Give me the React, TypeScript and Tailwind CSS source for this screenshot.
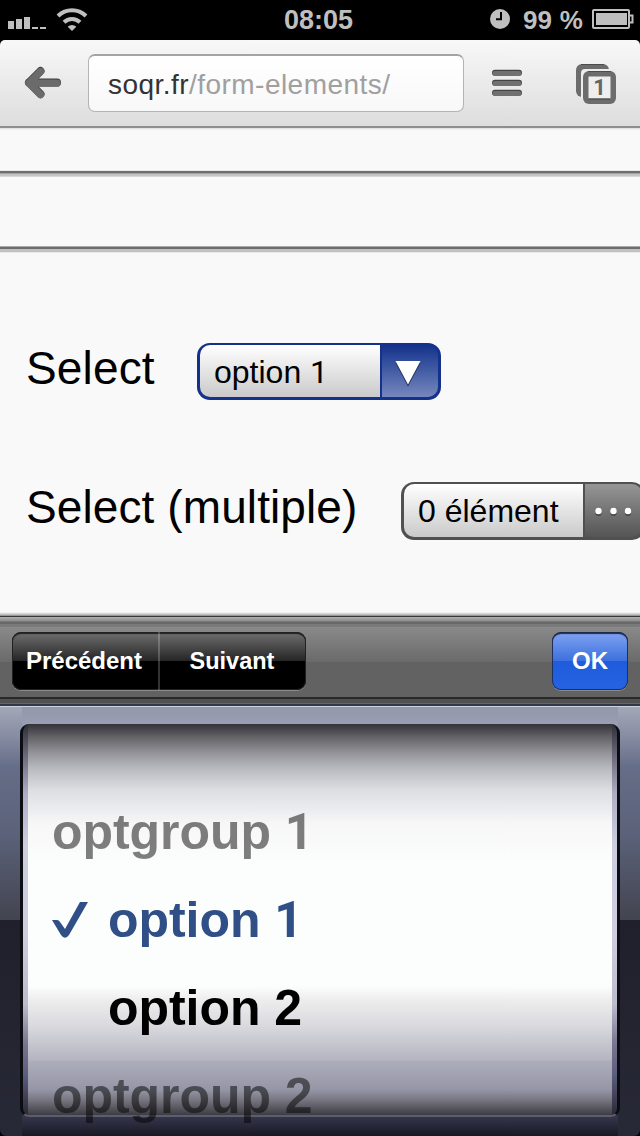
import React from "react";

const wheelRows = [
  { label: "optgroup", number: "1", kind: "group" },
  { label: "option", number: "1", kind: "selected" },
  { label: "option", number: "2", kind: "option" },
  { label: "optgroup", number: "2", kind: "group" },
];

function StatusBar() {
  return (
    <header className="grid h-10 grid-cols-[1fr_auto_1fr] items-center bg-black text-[#bfbfbf]">
      <div className="flex items-center pl-2">
        <svg width="82" height="40" viewBox="0 0 82 40" fill="#bfbfbf">
          <path d="M0 21h6v8H0zM8 19h6v10H8zM16 17h6v12h-6zM24 27h6v2h-6zM32 27h6v2h-6z" />
          <path d="M64 31l-4.300-4.300a6 6 0 0 1 8.600 0z" />
          <path d="M56 22.300a11.500 11.500 0 0 1 16 0" fill="none" stroke="#bfbfbf" strokeWidth="4" />
          <path d="M50 16a20 20 0 0 1 28 0" fill="none" stroke="#bfbfbf" strokeWidth="4" />
        </svg>
      </div>
      <div className="pr-[3px] text-[27px] leading-10 font-bold">08:05</div>
      <div className="flex items-center justify-end pr-1.5">
        <svg width="20" height="40" viewBox="0 0 20 40">
          <circle cx="10" cy="19" r="10" fill="#bfbfbf" />
          <path d="M11 12v7.300H6" fill="none" stroke="#000" strokeWidth="2" />
        </svg>
        <div className="ml-[13px] text-[26px] leading-10 font-bold tracking-[0.2px]">99 %</div>
        <svg className="ml-[9px]" width="42" height="40" viewBox="0 0 42 40">
          <path d="M2 9.900h34a1 1 0 0 1 1 1V27a1 1 0 0 1-1 1H2a1 1 0 0 1-1-1V10.900a1 1 0 0 1 1-1z" fill="none" stroke="#bfbfbf" strokeWidth="2" />
          <path d="M4 13h31v12H4z" fill="#bfbfbf" />
          <path d="M37 15.500h3.500v7H37" fill="none" stroke="#bfbfbf" strokeWidth="2" />
        </svg>
      </div>
    </header>
  );
}

function BrowserBar() {
  return (
    <div className="bg-black">
      <nav className="flex h-[88px] items-start rounded-t-[5px] border-b-2 border-[#8d8d8d] bg-linear-to-b from-[#f8f8f8] to-[#dddddd] pt-3.5">
        <svg className="ml-6" width="40" height="58" viewBox="0 0 40 58" fill="none" strokeLinecap="round" strokeLinejoin="round" strokeWidth="8">
          <path d="M16.500 17L5 28.500L16.500 40M5 28.500H33" stroke="#3c3c3c" />
          <path d="M16.500 17.700L5 29.200L16.500 40.700M5 29.200H33" stroke="#6b6b6b" strokeWidth="7.300" />
        </svg>
        <div className="ml-6 flex h-[58px] w-[376px] rounded-[7px] border border-t-2 border-[#b4b4b4] border-t-[#a4a4a4] bg-linear-to-b from-white to-[#f8f8f8] pl-[19px] text-[28px] leading-[58px] tracking-[0.46px] text-[#a0a0a0]">
          <span className="text-[#333]">soqr.fr</span>
          <span>/form-elements/</span>
        </div>
        <svg className="ml-7" width="32" height="58" viewBox="0 0 32 58">
          <path d="M3 18.800h24M3 28.800h24M3 38.800h24" stroke="#444" strokeWidth="6" strokeLinecap="round" />
          <path d="M3 19.500h24M3 29.500h24M3 39.500h24" stroke="#707070" strokeWidth="5" strokeLinecap="round" />
        </svg>
        <svg className="ml-[52px]" width="42" height="58" viewBox="0 0 42 58">
          <rect x="0" y="10" width="33" height="33" rx="6" fill="#6c6c6c" />
          <path d="M5 10.500h23" stroke="#4c4c4c" />
          <path d="M5 43V19a4 4 0 0 1 4-4h31v29H5z" fill="#ececec" />
          <rect x="7" y="17" width="33" height="33" rx="6" fill="#6c6c6c" />
          <path d="M12 17.500h23" stroke="#4c4c4c" />
          <rect x="12.500" y="22.500" width="22" height="22" fill="#eee" />
          <path d="M12.500 45h22" stroke="#444" />
          <text x="23.500" y="41" textAnchor="middle" fontSize="22" fontWeight="700" fill="#666" fontFamily="Roboto, sans-serif">1</text>
        </svg>
      </nav>
    </div>
  );
}

function FormPage() {
  return (
    <main className="flex h-[484px] flex-col overflow-hidden bg-[#f9f9f9] text-black">
      <div className="h-[42px] bg-[linear-gradient(#e2e2e2_0_1px,#f0f0f0_1px_2px,#f9f9f9_2px)]" />
      <div className="h-[7px] shrink-0 bg-[linear-gradient(#e8e8e8_0_1px,#6e6e6e_1px_3px,#a0a0a0_3px_4px,#c4c4c4_4px_6px,#d8d8d8_6px)]" />
      <div className="h-[69px] shrink-0" />
      <div className="h-[7px] shrink-0 bg-[linear-gradient(#a8a8a8_0_1px,#6e6e6e_1px_3px,#c2c2c2_3px_6px,#e8e8e8_6px)]" />
      <div className="mt-[89px] flex h-[60px] shrink-0 items-start pl-[26px]">
        <label className="w-[171px] text-[46px] leading-[52px] tracking-[0.15px]">Select</label>
        <button className="mt-px flex h-[57px] w-[244px] overflow-hidden rounded-[13px] bg-[#14318b] px-[3px] pt-[2px] pb-[3px] text-left text-[32px] leading-[55px]">
          <span className="h-[52px] w-[180px] shrink-0 rounded-l-[10px] bg-linear-to-b from-white to-[#cacaca] pl-3.5">
            option <span className="font-[Roboto,sans-serif]">1</span>
          </span>
          <span className="ml-[2px] flex h-[52px] w-[56px] justify-center rounded-r-[10px] bg-linear-to-b from-[#14318b] to-[#7787bd]">
            <svg className="-ml-[5px]" width="30" height="52" viewBox="0 0 30 52">
              <path d="M2.500 18h25L15 41.500z" fill="#233055" />
              <path d="M2.500 16h25L15 39.500z" fill="white" />
            </svg>
          </span>
        </button>
      </div>
      <div className="mt-[79px] flex h-[60px] shrink-0 items-start pl-[26px]">
        <label className="w-[375px] shrink-0 text-[46px] leading-[52px] tracking-[0.1px] whitespace-nowrap">Select (multiple)</label>
        <button className="mt-px flex h-[58px] w-[244px] shrink-0 overflow-hidden rounded-[13px] bg-[#505050] p-[3px] pt-[2px] text-left text-[32px] leading-[55px]">
          <span className="h-[53px] w-[179px] shrink-0 rounded-l-[10px] bg-linear-to-b from-white to-[#cacaca] pl-3.5">0 élément</span>
          <span className="ml-[2px] h-[53px] w-[57px] rounded-r-[10px] bg-linear-to-b from-[#969696] to-[#555]">
            <svg width="56" height="52" viewBox="0 0 56 52">
              <g fill="#444"><circle cx="13.500" cy="29" r="3" /><circle cx="28.500" cy="29" r="3" /><circle cx="43" cy="29" r="3" /></g>
              <g fill="white"><circle cx="13.500" cy="27" r="3.200" /><circle cx="28.500" cy="27" r="3.200" /><circle cx="43" cy="27" r="3.200" /></g>
            </svg>
          </span>
        </button>
      </div>
    </main>
  );
}

function AccessoryBar() {
  return (
    <div className="flex h-[95px] items-start justify-between bg-[linear-gradient(#f0f0f0_0_1px,#d8d8d8_1px_2px,#bdbdbd_2px_3px,#989898_3px_4px,#383838_4px_5px,#b2b2b2_5px,#8c8c8c_9px,#686868_10px_12px,#7a7a7a_12px_15px,#8a8a8a_15px,#6a6a6a_50px,#626262_50px,#626262_85px,#292929_85px_87px,#515151_87px_91px,#68675f_91px_92px,#30394a_92px_94px,#cbd2dc_94px)] px-3 pt-5 text-[24px] font-bold text-white [text-shadow:0_-2px_1px_rgba(0,0,0,.6)]">
      <div className="flex h-[58px] w-[294px] rounded-[9px] bg-[linear-gradient(#707070,#252525_50%,#000_50%)] leading-[56px] shadow-[inset_0_2px_1px_#222,inset_0_0_0_1px_#222,0_1px_0_#8a8a8a]">
        <button className="w-[148px] border-r-2 border-white/20 pr-[2px] text-center">Précédent</button>
        <button className="w-[146px] pr-[2px] text-center text-[23.5px]">Suivant</button>
      </div>
      <button className="h-[58px] w-[76px] rounded-[9px] bg-[linear-gradient(#81a4f2,#3c70dd_50%,#1f5cdb_50%,#2463e2)] leading-[56px] shadow-[inset_0_2px_1px_#202947,inset_0_0_0_1px_#20315f,0_1px_0_#8a8a8a]">OK</button>
    </div>
  );
}

function Picker() {
  return (
    <section className="h-[429px] overflow-hidden bg-black">
      <div className="h-[429px] rounded-b-[6px] bg-[linear-gradient(#a2a8b7,#8b91a5_25px,#666d88_60px,#5a6178_130px,#434450_212.500px,#1f202b_213px,#282936)]">
        <div className="mx-[22px] h-[429px] bg-[linear-gradient(#9297aa,#999eb3_17px,#999eb3_20px,#1f202b_390px,#34354a_410px,#181924)]">
          <div className="-mx-[2px] h-[17px]" />
          <div className="-mx-[2px] h-[393px] rounded-[9px] border-x-[3px] border-b-2 border-x-[#0c0d13] border-b-[#5d5d6b] bg-[linear-gradient(#2e2e38,#686577_30px,#adadc4_70px,#cdcde0_120px,#cdcde0_210px,#bbbbce_280px,#77758f_320px,#5c5e7f_350px,#292935)] px-[5px]">
            <div className="h-[391px] bg-[linear-gradient(#333236,#67666a_14px,#919096_28px,#b8b8c0_44px,#dddee2_66px,#f7f7f8_100px,#fcfdfd_140px,#fcfdfd_262px,#ededee_276px,#dadadf_301px,#c1c1ca_324px,#b5b5c0_336px,#adaebb_337px,#9595a6_366px,#77757f_376px,#3d3b43_391px)] pt-16">
              {wheelRows.map((row) => (
                <div
                  key={`${row.label}-${row.number}`}
                  className={
                    row.kind === "group"
                      ? "flex h-[88px] pl-6 text-[50px] leading-[88px] font-bold tracking-[-0.050px] text-black/50"
                      : row.kind === "selected"
                        ? "flex h-[88px] pl-6 text-[50px] leading-[88px] font-bold tracking-[-0.050px] text-[#304f87]"
                        : "flex h-[88px] pl-20 text-[50px] leading-[88px] font-bold tracking-[-0.050px] text-black"
                  }
                >
                  {row.kind === "selected" && (
                    <svg className="mr-5" width="36" height="88" viewBox="0 0 36 88">
                      <path d="M0 44h5q2 0 3 2l5 7L28 26h8L17 59q-4 5.500-8 0z" fill="#304f87" />
                    </svg>
                  )}
                  <span className="whitespace-pre">
                    {row.label}{" "}
                    <span className={row.number === "1" ? "font-[Roboto,sans-serif]" : ""}>{row.number}</span>
                  </span>
                </div>
              ))}
            </div>
          </div>
        </div>
      </div>
    </section>
  );
}

export default function App() {
  return (
    <div className="h-[1136px] w-[640px] overflow-hidden bg-black font-['Liberation_Sans',Arial,sans-serif]">
      <StatusBar />
      <BrowserBar />
      <FormPage />
      <AccessoryBar />
      <Picker />
    </div>
  );
}
